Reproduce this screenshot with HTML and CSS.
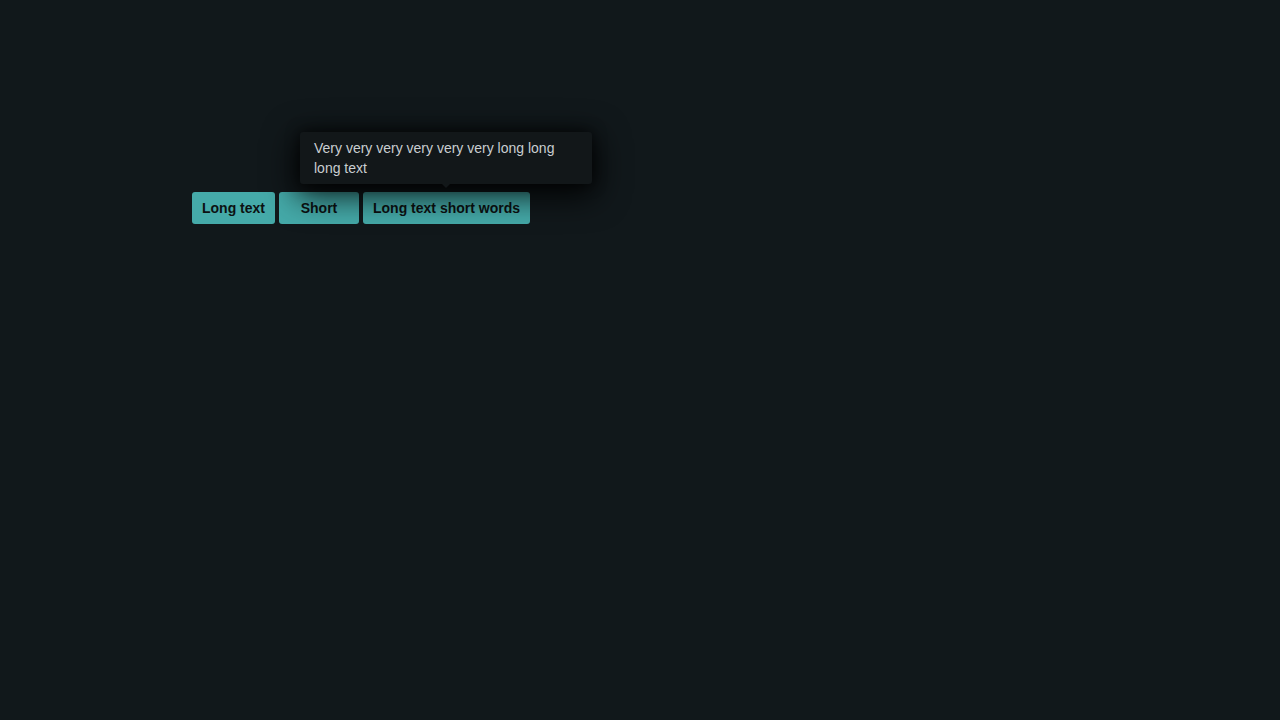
FILE: index.html
```html
<!DOCTYPE html>
<html>
<head>
<meta charset="utf-8">
<link rel="stylesheet" href="styles.css">
</head>
<body>
<div class="page">
  <div class="buttons">
    <button class="btn">Long text</button>
    <button class="btn">Short</button>
    <span class="anchor">
      <button class="btn">Long text short words</button>
      <div class="tooltip">Very very very very very very long long long text</div>
    </span>
  </div>
</div>
</body>
</html>
```

FILE: styles.css
```css
html, body {
  margin: 0;
  height: 100%;
  background: #11181b;
}
.page {
  padding: 192px 0 0 192px;
  font-family: "Liberation Sans", Arial, sans-serif;
}
.buttons {
  display: flex;
  gap: 4px;
}
.btn {
  height: 32px;
  min-width: 80px;
  padding: 0 10px;
  border: none;
  border-radius: 3px;
  background: #45aaa9;
  color: #0c1112;
  font-family: "Liberation Sans", Arial, sans-serif;
  font-weight: bold;
  font-size: 14px;
  cursor: pointer;
}
.anchor {
  position: relative;
  display: flex;
}
.tooltip {
  position: absolute;
  bottom: 40px;
  left: -63px;
  width: 264px;
  padding: 6px 14px;
  background: #121719;
  color: #c9ced1;
  font-size: 14px;
  line-height: 20px;
  border-radius: 3px;
  box-shadow: 0 8px 32px 4px rgba(0, 0, 0, 0.85), 0 0 14px rgba(0, 0, 0, 0.6);
}
.tooltip::after {
  content: "";
  position: absolute;
  left: 50%;
  bottom: -4px;
  margin-left: -4px;
  border-left: 4px solid transparent;
  border-right: 4px solid transparent;
  border-top: 4px solid #121719;
}
```
